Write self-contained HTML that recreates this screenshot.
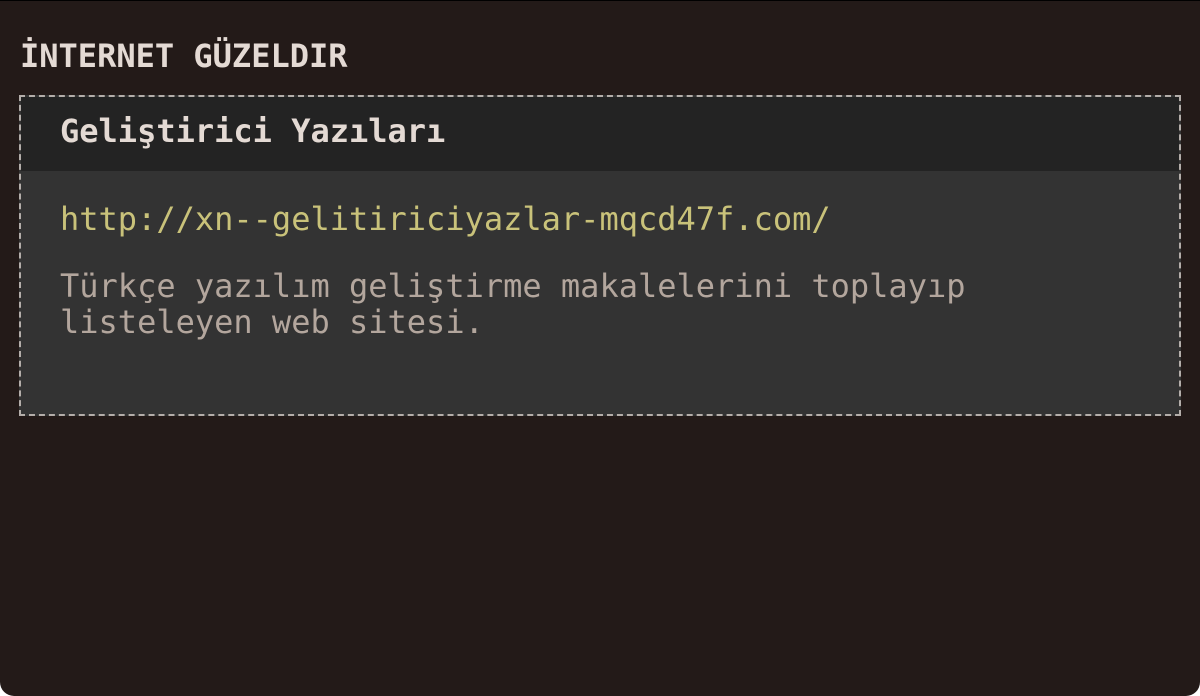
<!DOCTYPE html>
<html><head><meta charset="utf-8"><style>
html,body{margin:0;padding:0;background:#fff;}
.frame{position:absolute;left:0;top:0;width:1200px;height:696px;background:#231a18;border-top:1px solid #000;box-sizing:border-box;border-radius:0 0 14px 14px;overflow:hidden;font-family:"DejaVu Sans Mono","Liberation Mono",monospace;}
.title{position:absolute;left:20px;top:35px;font-size:32px;font-weight:bold;color:#e4dad4;line-height:40px;white-space:nowrap;}
.box{position:absolute;left:19px;top:94px;width:1162px;height:321px;box-sizing:border-box;border:2px dashed #b4aeaa;background:#333333;}
.hd{height:74px;background:#232323;}
.hd span{position:absolute;left:39px;top:14px;font-size:32px;font-weight:bold;color:#e4dad4;line-height:40px;white-space:nowrap;}
.url{position:absolute;left:39px;top:102px;font-size:32px;color:#c9c27a;line-height:40px;white-space:nowrap;}
.desc{position:absolute;left:39px;top:171px;font-size:32px;color:#b3a69d;line-height:36px;white-space:nowrap;}
</style></head><body>
<div class="frame">
<div class="title">İNTERNET GÜZELDIR</div>
<div class="box">
<div class="hd"><span>Geliştirici Yazıları</span></div>
<div class="url">http://xn--gelitiriciyazlar-mqcd47f.com/</div>
<div class="desc">Türkçe yazılım geliştirme makalelerini toplayıp<br>listeleyen web sitesi.</div>
</div>
</div>
</body></html>
